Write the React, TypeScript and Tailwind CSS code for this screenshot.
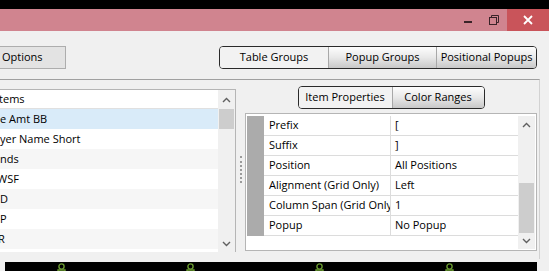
import { FC, ReactNode } from "react";

const font = { fontFamily: '"Open Sans", "Noto Sans", sans-serif' };

const ChevronUp: FC = () => (
  <svg width="9" height="6" viewBox="0 0 9 6" fill="none">
    <path d="M1 5 L4.5 1.5 L8 5" stroke="#606060" strokeWidth="1.4" />
  </svg>
);

const ChevronDown: FC = () => (
  <svg width="9" height="6" viewBox="0 0 9 6" fill="none">
    <path d="M1 1 L4.5 4.5 L8 1" stroke="#606060" strokeWidth="1.4" />
  </svg>
);

interface SegProps {
  label: string;
  active?: boolean;
  className?: string;
}

// segmented button, flat when active, gradient otherwise
const Seg: FC<SegProps> = ({ label, active, className }) => (
  <div
    className={`flex items-center justify-center h-full whitespace-nowrap ${className ?? ""} ${
      active ? "bg-[#f2f2f2]" : "bg-gradient-to-b from-[#fdfdfd] via-[#e8e8e8] to-[#c8c8c8]"
    }`}
  >
    {label}
  </div>
);

const listRows: { text: string; shift: string; bg: string }[] = [
  { text: "e Amt BB", shift: "ml-[0px]", bg: "bg-[#d9ebf9]" },
  { text: "yer Name Short", shift: "ml-[0px]", bg: "bg-white" },
  { text: "nds", shift: "ml-[0px]", bg: "bg-[#f6f6f6]" },
  { text: "WSF", shift: "-ml-[3px]", bg: "bg-white" },
  { text: "D", shift: "ml-[0px]", bg: "bg-[#f6f6f6]" },
  { text: "P", shift: "ml-[0px]", bg: "bg-white" },
  { text: "R", shift: "-ml-[2px]", bg: "bg-[#f6f6f6]" },
];

const props: [string, string][] = [
  ["Prefix", "["],
  ["Suffix", "]"],
  ["Position", "All Positions"],
  ["Alignment (Grid Only)", "Left"],
  ["Column Span (Grid Only)", "1"],
  ["Popup", "No Popup"],
];

const TitleButton: FC<{ children: ReactNode; className?: string }> = ({ children, className }) => (
  <div className={`flex items-center justify-center h-full ${className ?? ""}`}>{children}</div>
);

export default function App() {
  return (
    <div
      className="w-[549px] h-[271px] overflow-hidden bg-[#f0f0f0] flex flex-col text-[11px] text-black"
      style={font}
    >
      {/* top strip */}
      <div className="h-[9px] bg-black shrink-0" />

      {/* title bar */}
      <div className="h-[22px] bg-[#d0848f] flex justify-end shrink-0">
        <TitleButton className="w-[26px]">
          <div className="w-[8px] h-[2px] bg-[#3a2328] mt-[4px]" />
        </TitleButton>
        <TitleButton className="w-[26px]">
          <svg width="10" height="10" viewBox="0 0 10 10" fill="none">
            <rect x="0.5" y="2.5" width="7" height="7" stroke="#3a2328" />
            <path d="M2.5 2.5 V0.5 H9.5 V7.5 H7.5" stroke="#3a2328" />
          </svg>
        </TitleButton>
        <TitleButton className="w-[42px] bg-[#c9545a]">
          <svg width="10" height="10" viewBox="0 0 10 10">
            <path d="M1 1 L9 9 M9 1 L1 9" stroke="white" strokeWidth="1.8" />
          </svg>
        </TitleButton>
      </div>

      {/* toolbar */}
      <div className="flex items-center h-[23px] mt-[15px] shrink-0">
        <div className="w-[66px] h-full bg-[#e3e3e3] border border-l-0 border-[#adadad] flex items-center pl-[2px]">
          Options
        </div>
        <div className="ml-[153px] w-[318px] h-[23px] flex border border-[#2a2a2a] rounded-[4px] overflow-hidden">
          <Seg label="Table Groups" active className="w-[108px]" />
          <Seg label="Popup Groups" className="w-[108px] border-l border-[#a8a8a8]" />
          <Seg label="Positional Popups" className="flex-1 border-l border-[#a8a8a8]" />
        </div>
      </div>

      {/* main panel */}
      <div className="mt-[10px] w-[540px] h-[180px] border-t border-r border-t-[#a0a0a0] border-r-[#d2d2d2] flex items-start shrink-0">
        {/* items list */}
        <div className="mt-[9px] w-[236px] h-[163px] bg-white border-t border-r border-[#b5b5b5] flex overflow-hidden">
          <div className="flex-1 flex flex-col overflow-hidden">
            <div className="h-[19px] shrink-0 border-b border-[#e0e0e0] flex items-center">
              <span className="-ml-[4px] whitespace-nowrap">Items</span>
            </div>
            {listRows.map((r) => (
              <div key={r.text} className={`h-[20px] shrink-0 flex items-center ${r.bg}`}>
                <span className={`${r.shift} whitespace-nowrap`}>{r.text}</span>
              </div>
            ))}
          </div>
          <div className="w-[17px] bg-[#f0f0f0] flex flex-col">
            <div className="h-[19px] flex items-center justify-center">
              <ChevronUp />
            </div>
            <div className="h-[20px] bg-[#cdcdcd] mx-[1px]" />
            <div className="flex-1" />
            <div className="h-[17px] flex items-center justify-center">
              <ChevronDown />
            </div>
          </div>
        </div>

        {/* splitter */}
        <div className="w-[9px] self-stretch flex items-center justify-center">
          <div className="h-[27px] border-l-2 border-dotted border-[#9a9a9a]" />
        </div>

        {/* properties side */}
        <div className="w-[292px] flex flex-col items-center">
          <div className="mt-[6px] h-[23px] w-[187px] flex border border-[#2a2a2a] rounded-[4px] overflow-hidden">
            <Seg label="Item Properties" active className="w-[93px]" />
            <Seg label="Color Ranges" className="flex-1 border-l border-[#a8a8a8]" />
          </div>

          <div className="mt-[4px] w-full h-[138px] bg-white border border-[#b5b5b5] flex p-[1px] pt-[2px]">
            <div className="flex-1 flex flex-col">
              <div className="flex">
                <div className="w-[17px] h-[120px] bg-[#ababab]" />
                <div className="flex-1 flex flex-col">
                  {props.map(([k, v]) => (
                    <div key={k} className="h-[20px] flex border-b border-[#dcdcdc]">
                      <div className="w-[127px] pl-[5px] border-r border-[#dcdcdc] overflow-hidden whitespace-nowrap flex items-center">
                        {k}
                      </div>
                      <div className="flex-1 pl-[4px] flex items-center">{v}</div>
                    </div>
                  ))}
                </div>
              </div>
            </div>
            <div className="w-[17px] bg-[#f0f0f0] flex flex-col">
              <div className="h-[18px] flex items-center justify-center">
                <ChevronUp />
              </div>
              <div className="flex-1" />
              <div className="h-[50px] bg-[#cdcdcd] mx-[1px]" />
              <div className="h-[16px] flex items-center justify-center">
                <ChevronDown />
              </div>
            </div>
          </div>
        </div>
      </div>

      {/* dark strip with status icons */}
      <div className="mt-[3px] ml-[5px] w-[532px] flex-1 bg-black flex">
        {[51, 118, 118, 119].map((gap, i) => (
          <div key={i} style={{ marginLeft: gap }} className="mt-[1px]">
            <svg width="11" height="9" viewBox="0 0 11 9" fill="none">
              <circle cx="5.5" cy="3.5" r="2.6" stroke="#6a9a30" strokeWidth="1.4" />
              <path d="M2 9 V7 H9 V9" stroke="#6a9a30" strokeWidth="1.4" />
            </svg>
          </div>
        ))}
      </div>
    </div>
  );
}
